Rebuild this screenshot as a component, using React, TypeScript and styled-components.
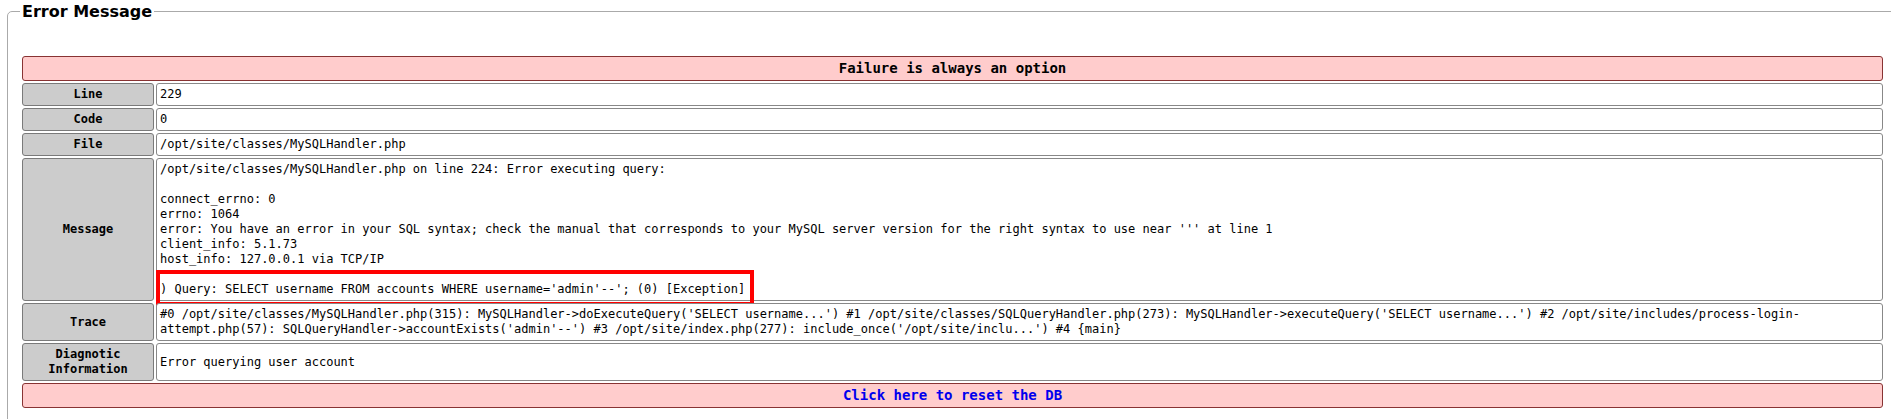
import React from "react";
import styled, { createGlobalStyle } from "styled-components";

const GlobalStyle = createGlobalStyle`
  html, body {
    margin: 0;
    padding: 0;
    overflow: hidden;
    background: #ffffff;
  }
`;

const Frame = styled.fieldset`
  box-sizing: border-box;
  width: 1891px;
  margin: 2px 0 0 7px;
  padding: 33px 12px 20px 12px;
  border: 1px solid #aaaaaa;
  border-radius: 5px;
  min-width: 0;
`;

const Title = styled.legend`
  padding: 0 2px;
  font-family: "DejaVu Sans", Verdana, sans-serif;
  font-weight: bold;
  font-size: 16px;
  color: #000;
`;

const Grid = styled.table`
  width: 100%;
  border-collapse: separate;
  border-spacing: 2px;
  font-family: "DejaVu Sans Mono", monospace;
  font-size: 12px;
  line-height: 15px;
  color: #000;
`;

const Banner = styled.th<{ $link?: boolean }>`
  background: #ffcccc;
  border: 1px solid #883333;
  border-radius: 3px;
  padding: 3px;
  font-size: 14px;
  line-height: 17px;
  font-weight: bold;
  text-align: center;
  color: ${(p) => (p.$link ? "#0000ee" : "#000")};
`;

const LinkText = styled.a`
  color: inherit;
  text-decoration: none;
  cursor: pointer;
`;

const Label = styled.th`
  box-sizing: border-box;
  width: 132px;
  background: #cccccc;
  border: 1px solid #7a7a7a;
  border-radius: 3px;
  padding: 3px;
  font-weight: bold;
  text-align: center;
  vertical-align: middle;
`;

const Value = styled.td`
  position: relative;
  background: #ffffff;
  border: 1px solid #888888;
  border-radius: 3px;
  padding: 3px;
  text-align: left;
  vertical-align: top;
  white-space: pre-wrap;
`;

const ValueMiddle = styled(Value)`
  vertical-align: middle;
`;

const Marked = styled.span`
  position: relative;
  &::after {
    content: "";
    position: absolute;
    left: -4px;
    top: -12px;
    width: 598px;
    height: 36px;
    box-sizing: border-box;
    border: 4px solid #ff0000;
    pointer-events: none;
  }
`;

const rows: { label: React.ReactNode; value: React.ReactNode; middle?: boolean }[] = [
  { label: "Line", value: "229" },
  { label: "Code", value: "0" },
  { label: "File", value: "/opt/site/classes/MySQLHandler.php" },
  {
    label: "Message",
    value: (
      <>
        {"/opt/site/classes/MySQLHandler.php on line 224: Error executing query:\n\nconnect_errno: 0\nerrno: 1064\nerror: You have an error in your SQL syntax; check the manual that corresponds to your MySQL server version for the right syntax to use near ''' at line 1\nclient_info: 5.1.73\nhost_info: 127.0.0.1 via TCP/IP\n\n"}
        <Marked>{") Query: SELECT username FROM accounts WHERE username='admin'--'; (0) [Exception]"}</Marked>
      </>
    ),
  },
  {
    label: "Trace",
    value:
      "#0 /opt/site/classes/MySQLHandler.php(315): MySQLHandler->doExecuteQuery('SELECT username...') #1 /opt/site/classes/SQLQueryHandler.php(273): MySQLHandler->executeQuery('SELECT username...') #2 /opt/site/includes/process-login-attempt.php(57): SQLQueryHandler->accountExists('admin'--') #3 /opt/site/index.php(277): include_once('/opt/site/inclu...') #4 {main}",
  },
  {
    label: (
      <>
        Diagnotic
        <br />
        Information
      </>
    ),
    value: "Error querying user account",
    middle: true,
  },
];

export default function App() {
  return (
    <>
      <GlobalStyle />
      <Frame>
        <Title>Error Message</Title>
        <Grid>
          <tbody>
            <tr>
              <Banner colSpan={2}>Failure is always an option</Banner>
            </tr>
            {rows.map((r, i) => (
              <tr key={i}>
                <Label>{r.label}</Label>
                {r.middle ? <ValueMiddle>{r.value}</ValueMiddle> : <Value>{r.value}</Value>}
              </tr>
            ))}
            <tr>
              <Banner colSpan={2} $link>
                <LinkText>Click here to reset the DB</LinkText>
              </Banner>
            </tr>
          </tbody>
        </Grid>
      </Frame>
    </>
  );
}
